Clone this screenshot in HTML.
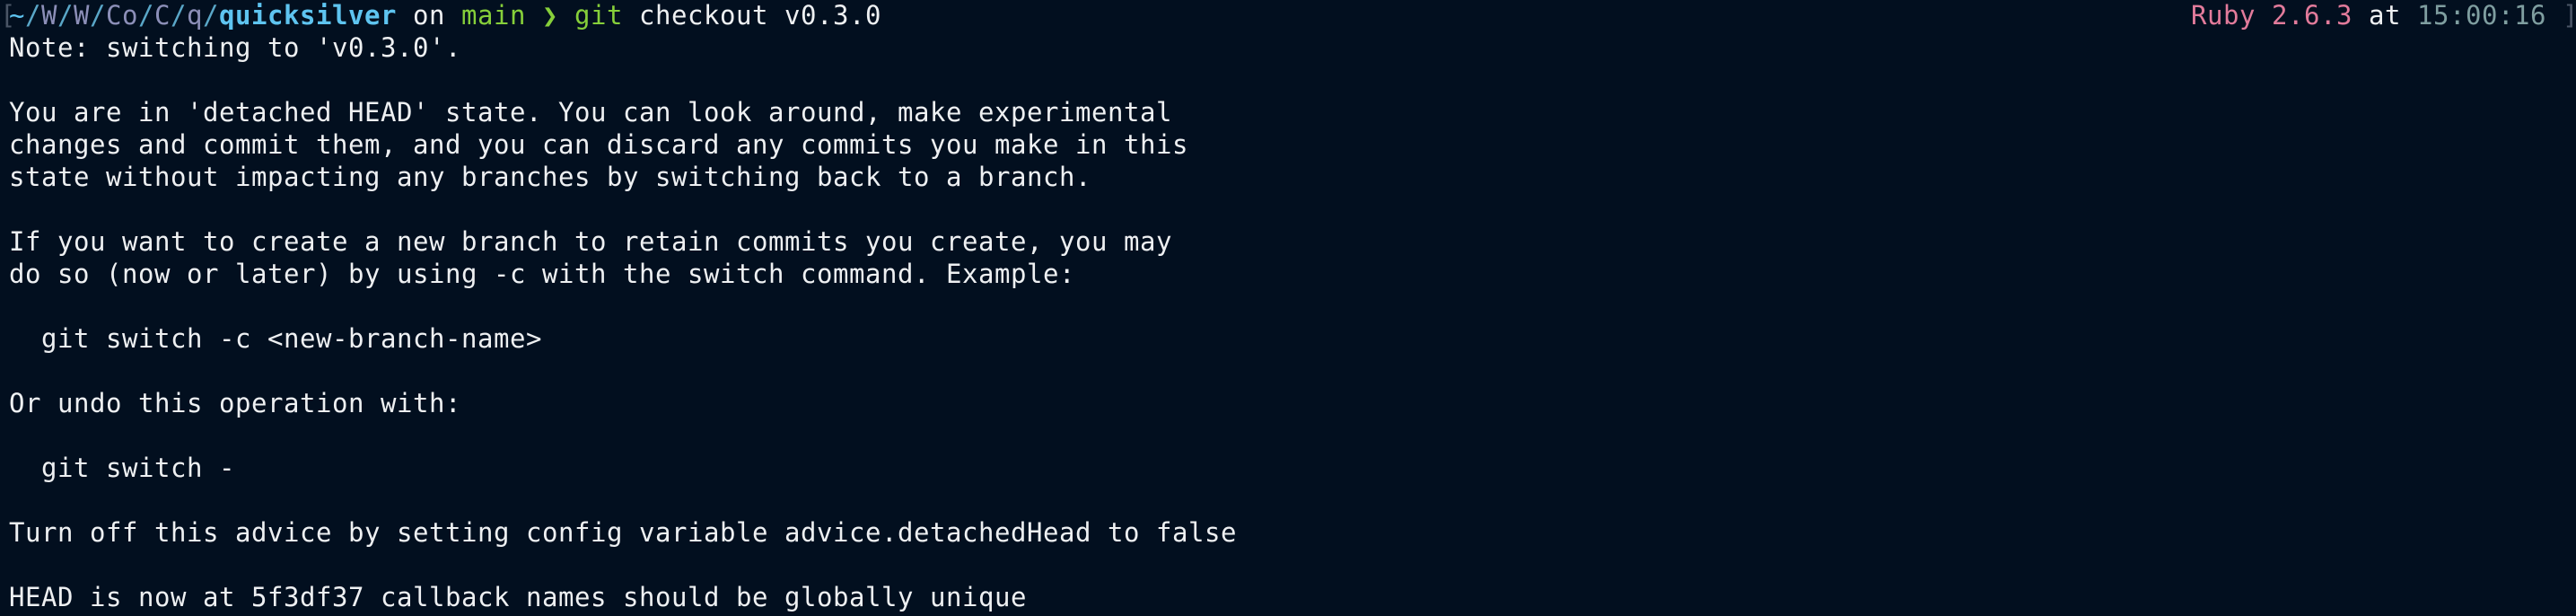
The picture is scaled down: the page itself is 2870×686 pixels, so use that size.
<!DOCTYPE html>
<html><head><meta charset="utf-8"><style>
html,body{margin:0;padding:0;background:#020f1f;width:2870px;height:686px;overflow:hidden}
pre{margin:0;position:absolute;left:10px;top:-1px;font-family:"DejaVu Sans Mono","Liberation Mono",monospace;font-size:29px;letter-spacing:0.54px;line-height:36px;color:#eef0f2}
.r{position:absolute;left:2441px;top:-1px;margin:0}
.lb{position:absolute;left:0px;top:-1px;margin:0;color:#4a5566;font-family:"DejaVu Sans Mono",monospace;font-size:29px;line-height:36px}
.t{color:#5ec4f0}.w{color:#8c8fb8}.g{color:#5aa7c8}.b{color:#5ec4f0;font-weight:bold}.gr{color:#86cf3a}
.p{color:#e27b9b}.tm{color:#7f9ea0}
</style></head><body>
<div class="lb">[</div>
<pre><span class="t">~</span><span class="g">/</span><span class="w">W</span><span class="g">/</span><span class="w">W</span><span class="g">/</span><span class="w">Co</span><span class="g">/</span><span class="w">C</span><span class="g">/</span><span class="w">q</span><span class="g">/</span><span class="b">quicksilver</span> on <span class="gr">main</span> <span class="gr">❯</span> <span class="gr">git</span> checkout v0.3.0
Note: switching to 'v0.3.0'.

You are in 'detached HEAD' state. You can look around, make experimental
changes and commit them, and you can discard any commits you make in this
state without impacting any branches by switching back to a branch.

If you want to create a new branch to retain commits you create, you may
do so (now or later) by using -c with the switch command. Example:

  git switch -c &lt;new-branch-name&gt;

Or undo this operation with:

  git switch -

Turn off this advice by setting config variable advice.detachedHead to false

HEAD is now at 5f3df37 callback names should be globally unique</pre>
<pre class="r"><span class="p">Ruby 2.6.3</span> at <span class="tm">15:00:16</span> <span style="color:#4a5566">]</span></pre>
</body></html>
